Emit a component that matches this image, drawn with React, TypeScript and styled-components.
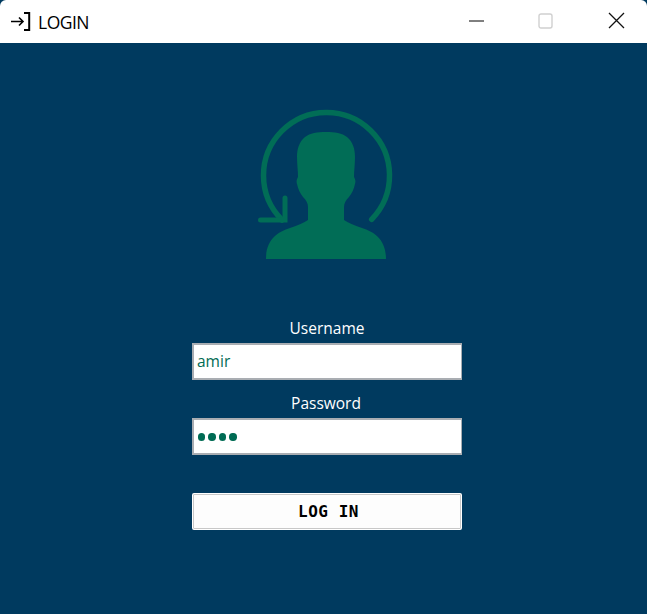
import React from "react";
import styled, { createGlobalStyle } from "styled-components";

const Global = createGlobalStyle`
  html, body { margin: 0; padding: 0; background: #003a5f; }
  #root { width: 647px; height: 614px; }
  * { box-sizing: border-box; }
`;

const Win = styled.div`
  width: 647px;
  height: 614px;
  display: flex;
  flex-direction: column;
  background: #003a5f;
  font-family: "Open Sans", "Noto Sans", sans-serif;
  overflow: hidden;
`;

const TitleBar = styled.header`
  height: 43px;
  flex: none;
  background: #fff;
  border-radius: 6px 6px 0 0;
  display: flex;
  align-items: center;
  padding-left: 10px;
`;

const TitleIcon = styled.svg`
  width: 22px;
  height: 22px;
  flex: none;
`;

const Title = styled.span`
  margin-left: 6px;
  font-size: 17.5px;
  letter-spacing: -0.5px;
  color: #000;
  flex: 1;
`;

const Controls = styled.div`
  display: flex;
  align-items: center;
  margin-right: -4px;
`;

const Control = styled.div`
  width: 70px;
  height: 43px;
  display: flex;
  align-items: center;
  justify-content: center;
  padding-bottom: 2px;
`;

const Body = styled.main`
  flex: 1;
  display: flex;
  flex-direction: column;
  padding-left: 192px;
`;

const Logo = styled.svg`
  width: 140px;
  height: 160px;
  margin: 62px 0 0 63px;
  flex: none;
`;

const Form = styled.form`
  width: 270px;
  margin-top: 48px;
  display: flex;
  flex-direction: column;
`;

const Label = styled.label<{ $second?: boolean }>`
  display: block;
  height: 30px;
  margin-top: ${(p) => (p.$second ? "-7px" : "0")};
  padding-right: ${(p) => (p.$second ? "2px" : "0")};
  line-height: 31px;
  text-align: center;
  color: #fff;
  font-size: 15.5px;
`;

const Field = styled.input`
  display: block;
  width: 270px;
  height: 37px;
  margin: 0 0 15px;
  padding: 0 3px 2px;
  border-style: solid;
  border-color: #a9adb2;
  border-width: 2px 1px 2px 2px;
  border-radius: 0;
  background: #fff;
  color: #006b54;
  font-family: inherit;
  font-size: 15.5px;
  outline: none;
`;

const Dots = styled.div`
  display: flex;
  align-items: center;
  gap: 3.2px;
  width: 270px;
  height: 37px;
  padding: 1px 4px 0;
  border-style: solid;
  border-color: #a9adb2;
  border-width: 2px 1px 2px 2px;
  background: #fff;
`;

const Dot = styled.span`
  width: 7.3px;
  height: 7.3px;
  border-radius: 50%;
  background: #006b54;
`;

const Button = styled.button`
  width: 270px;
  height: 37px;
  margin-top: 38px;
  background: #fdfdfd;
  border: 2px solid #fff;
  outline: 1px solid #c8c8c8;
  outline-offset: -2px;
  border-radius: 2px;
  color: #000;
  font-family: "DejaVu Sans Mono", monospace;
  font-weight: 700;
  font-size: 16px;
  letter-spacing: 0.5px;
  padding: 0 0 0 3px;
`;

const green = "#016d56";

export default function App() {
  return (
    <>
      <Global />
      <Win>
        <TitleBar>
          <TitleIcon viewBox="0 0 22 22" fill="none" stroke="#000" strokeWidth="1.6">
            <path d="M1 10.5h12M9 6.5l4 4-4 4" />
            <path d="M14 2h5.2v17H14" strokeWidth="2" />
          </TitleIcon>
          <Title>LOGIN</Title>
          <Controls>
            <Control>
              <svg width="16" height="2" viewBox="0 0 16 2"><path d="M1 1h15" stroke="#000" strokeWidth="1" /></svg>
            </Control>
            <Control>
              <svg width="16" height="16" viewBox="0 0 16 16" fill="none"><rect x="1" y="1" width="13" height="14" rx="2" stroke="#d0d0d0" strokeWidth="1.4" /></svg>
            </Control>
            <Control>
              <svg width="18" height="18" viewBox="0 0 18 18" fill="none"><path d="M2 1l15 15M17 1L2 16" stroke="#111" strokeWidth="1.3" /></svg>
            </Control>
          </Controls>
        </TitleBar>
        <Body>
          <Logo viewBox="255 105 140 160">
            <path d="M371.7 219.3A63 63 0 1 0 282 220" fill="none" stroke={green} strokeWidth="5.5" strokeLinecap="round" />
            <path d="M260.5 220h24.500v-22" fill="none" stroke={green} strokeWidth="5" strokeLinecap="round" />
            <path
              fill={green}
              d="M326 132c-9 0-16 1-21 5-6 5-8 12-8 20 0 7 1 14 1 20-1 2-2 4-1 7 1 5 3 9 6 13 3 3 5 6 5 10v13c-4 3-10 5-18 8-12 4-24 11-24 31h120c0-20-12-27-24-31-8-3-14-5-18-8v-13c0-4 2-7 5-10 3-4 5-8 6-13 1-3 0-5-1-7 0-6 1-13 1-20 0-8-2-15-8-20-5-4-12-5-21-5z"
            />
          </Logo>
          <Form>
            <Label>Username</Label>
            <Field defaultValue="amir" readOnly />
            <Label $second>Password</Label>
            <Dots><Dot /><Dot /><Dot /><Dot /></Dots>
            <Button type="button">LOG IN</Button>
          </Form>
        </Body>
      </Win>
    </>
  );
}
